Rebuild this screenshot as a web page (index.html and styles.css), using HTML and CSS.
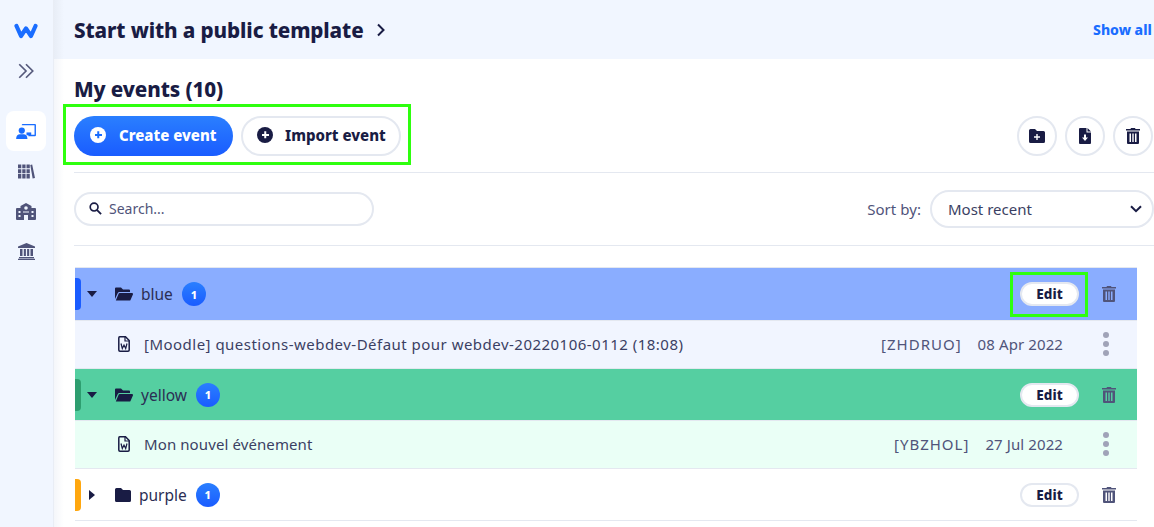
FILE: index.html
```html
<!DOCTYPE html>
<html lang="en">
<head>
<meta charset="utf-8">
<title>My events</title>
<link rel="stylesheet" href="styles.css">
</head>
<body>
<div class="app">
  <nav class="side">
    <svg class="logo" viewBox="0 0 24 16" width="24" height="16"><path d="M2.500 3 L7 13 L12 5.500 L17 13 L21.500 3" fill="none" stroke="#1a6dff" stroke-width="4.200" stroke-linecap="round" stroke-linejoin="round"/></svg>
    <svg class="chev" viewBox="0 0 16 16" width="18" height="18"><path d="M2 2 L8 8 L2 14 M8 2 L14 8 L8 14" fill="none" stroke="#565a7c" stroke-width="1.500"/></svg>
    <a class="nav-btn active"><svg viewBox="0 0 22 18" width="21" height="17"><path d="M6 2.500V1.800A1 1 0 0 1 7 1H20a1 1 0 0 1 1 1V13a1 1 0 0 1-1 1H13V12.500H19.500V2.500Z" fill="#1a6dff"/><rect x="11" y="10" width="5" height="3" fill="#1a6dff"/><circle cx="6" cy="8" r="3.300" fill="#1a6dff"/><path d="M0 17c0-3.500 2-5 4-5h4c2 0 4 1.500 4 5z" fill="#1a6dff"/></svg></a>
    <a class="nav-btn"><svg viewBox="0 0 18 17" width="17" height="17"><path d="M0 1h3.500v4H0zM4.500 1H8v4H4.500zM9 1h3.500v4H9zM0 6h3.500v4H0zM4.500 6H8v4H4.500zM9 6h3.500v4H9zM0 11h3.500v5H0zM4.500 11H8v5H4.500zM9 11h3.500v5H9zM13 1.500l2-.5 3 14.500-2.500.5z" fill="#50547a"/></svg></a>
    <a class="nav-btn"><svg viewBox="0 0 20 17" width="20" height="17"><path d="M0 6a1 1 0 0 1 1-1h3.500V3L10 0l5.500 3V5H19a1 1 0 0 1 1 1V16a1 1 0 0 1-1 1H12V12H8v5H1a1 1 0 0 1-1-1Z" fill="#50547a"/><circle cx="10" cy="5" r="1.800" fill="#f1f6ff"/><path d="M2.500 8h2v2h-2zM2.500 12h2v2h-2zM15.500 8h2v2h-2zM15.500 12h2v2h-2zM7 8.500h6v1H7z" fill="#f1f6ff"/></svg></a>
    <a class="nav-btn"><svg viewBox="0 0 17 17" width="17" height="17"><path d="M8.500 0 17 3.500V5H0V3.500ZM2 6h2.500v7H2zM5.800 6h2.100v7H5.800zM9.100 6h2.100v7H9.100zM12.500 6H15v7h-2.500zM1 14h15v1.200H1zM0 15.700h17V17H0z" fill="#50547a"/></svg></a>
  </nav>
  <div class="content">
    <header class="top">
      <h2 class="top-title">Start with a public template</h2>
      <svg class="top-chev" viewBox="0 0 10 14" width="10" height="14"><path d="M2 1.500 L7.500 7 L2 12.500" fill="none" stroke="#191c44" stroke-width="2"/></svg>
      <a class="show-all">Show all</a>
    </header>
    <main class="main">
      <h1 class="title">My events (10)</h1>
      <div class="actions">
        <div class="btn-group">
          <button class="btn btn-primary"><span class="plus plus-white"></span>Create event</button>
          <button class="btn btn-ghost"><span class="plus plus-dark"></span>Import event</button>
          <span class="highlight hl-actions"></span>
        </div>
        <div class="tools">
          <button class="round"><svg viewBox="0 0 16 14" width="16" height="14"><path d="M0 1.500A1.500 1.500 0 0 1 1.500 0H6l2 2h6.500A1.500 1.500 0 0 1 16 3.500v9a1.500 1.500 0 0 1-1.500 1.500h-13A1.500 1.500 0 0 1 0 12.500Z" fill="#191c44"/><path d="M7.300 5h1.400v2.300H11v1.400H8.700V11H7.300V8.700H5V7.300H7.300Z" fill="#fff"/></svg></button>
          <button class="round"><svg viewBox="0 0 12 16" width="12" height="16"><path d="M1 0H7.500V4.500H12V15a1 1 0 0 1-1 1H1a1 1 0 0 1-1-1V1a1 1 0 0 1 1-1ZM8.500 0 12 3.500H8.500Z" fill="#191c44"/><path d="M5 6.500H7V9.500H9L6 13 3 9.500H5Z" fill="#fff"/></svg></button>
          <button class="round"><svg class="trash" viewBox="0 0 14 16" width="14" height="16"><path d="M5 0H9L9.500 1H14V2.500H0V1H4.500ZM1 3.500H13V15A1 1 0 0 1 12 16H2A1 1 0 0 1 1 15ZM3.500 5.500V14H5V5.500ZM6.300 5.500V14H7.700V5.500ZM9 5.500V14H10.500V5.500Z" fill="#191c44" fill-rule="evenodd"/></svg></button>
        </div>
      </div>
      <div class="filters">
        <label class="search">
          <svg viewBox="0 0 14 14" width="13" height="13"><circle cx="5.500" cy="5.500" r="4.200" fill="none" stroke="#191c44" stroke-width="1.800"/><path d="M8.700 8.700 13 13" stroke="#191c44" stroke-width="2"/></svg>
          <span class="search-text">Search...</span>
        </label>
        <div class="sort">
          <span class="sort-label">Sort by:</span>
          <div class="select">Most recent
            <svg viewBox="0 0 12 8" width="12" height="8"><path d="M1 1.200 6 6.200 11 1.200" fill="none" stroke="#191c44" stroke-width="2"/></svg>
          </div>
        </div>
      </div>
      <div class="list">
        <div class="folder folder-blue">
          <span class="tab tab-blue"></span>
          <span class="caret-down"></span>
          <svg class="folder-ic" viewBox="0 0 18 14" width="18" height="14"><path d="M0 1.500A1 1 0 0 1 1 .5H6l2 2h6a1 1 0 0 1 1 1V5H4.500A2 2 0 0 0 2.700 6.200L0 12ZM3.700 6.500A1 1 0 0 1 4.600 6H17a1 1 0 0 1 .9 1.400L15.500 13a1 1 0 0 1-.9.6H.8Z" fill="#191c44"/></svg>
          <span class="name">blue</span>
          <span class="badge">1</span>
          <span class="edit">Edit</span>
          <span class="highlight hl-edit"></span>
          <svg class="bin" viewBox="0 0 14 16" width="14" height="16"><path d="M5 0H9L9.500 1H14V2.500H0V1H4.500ZM1 3.500H13V15A1 1 0 0 1 12 16H2A1 1 0 0 1 1 15ZM3.500 5.500V14H5V5.500ZM6.300 5.500V14H7.700V5.500ZM9 5.500V14H10.500V5.500Z" fill="#50547a" fill-rule="evenodd"/></svg>
        </div>
        <div class="item item-blue">
          <svg class="doc" viewBox="0 0 12 16" width="12" height="16"><path d="M1.800.8H7.500L11.200 4.500V14A1.200 1.200 0 0 1 10 15.200H2A1.200 1.200 0 0 1 .8 14V2A1.200 1.200 0 0 1 1.800.8Z" fill="none" stroke="#191c44" stroke-width="1.500"/><path d="M7 1V5H11" fill="none" stroke="#191c44" stroke-width="1.200"/><path d="M3 7.500 4.300 12.500 6 9 7.700 12.500 9 7.500" fill="none" stroke="#191c44" stroke-width="1.200"/></svg>
          <span class="item-name item-name-long">[Moodle] questions-webdev-Défaut pour webdev-20220106-0112 (18:08)</span>
          <span class="code">[ZHDRUO]</span>
          <span class="date">08 Apr 2022</span>
          <span class="dots"><i></i><i></i><i></i></span>
        </div>
        <div class="folder folder-green">
          <span class="tab tab-green"></span>
          <span class="caret-down"></span>
          <svg class="folder-ic" viewBox="0 0 18 14" width="18" height="14"><path d="M0 1.500A1 1 0 0 1 1 .5H6l2 2h6a1 1 0 0 1 1 1V5H4.500A2 2 0 0 0 2.700 6.200L0 12ZM3.700 6.500A1 1 0 0 1 4.600 6H17a1 1 0 0 1 .9 1.400L15.500 13a1 1 0 0 1-.9.6H.8Z" fill="#191c44"/></svg>
          <span class="name">yellow</span>
          <span class="badge">1</span>
          <span class="edit">Edit</span>
          <svg class="bin" viewBox="0 0 14 16" width="14" height="16"><path d="M5 0H9L9.500 1H14V2.500H0V1H4.500ZM1 3.500H13V15A1 1 0 0 1 12 16H2A1 1 0 0 1 1 15ZM3.500 5.500V14H5V5.500ZM6.300 5.500V14H7.700V5.500ZM9 5.500V14H10.500V5.500Z" fill="#50547a" fill-rule="evenodd"/></svg>
        </div>
        <div class="item item-green">
          <svg class="doc" viewBox="0 0 12 16" width="12" height="16"><path d="M1.800.8H7.500L11.200 4.500V14A1.200 1.200 0 0 1 10 15.200H2A1.200 1.200 0 0 1 .8 14V2A1.200 1.200 0 0 1 1.800.8Z" fill="none" stroke="#191c44" stroke-width="1.500"/><path d="M7 1V5H11" fill="none" stroke="#191c44" stroke-width="1.200"/><path d="M3 7.500 4.300 12.500 6 9 7.700 12.500 9 7.500" fill="none" stroke="#191c44" stroke-width="1.200"/></svg>
          <span class="item-name">Mon nouvel événement</span>
          <span class="code">[YBZHOL]</span>
          <span class="date">27 Jul 2022</span>
          <span class="dots"><i></i><i></i><i></i></span>
        </div>
        <div class="folder folder-plain">
          <span class="tab tab-orange"></span>
          <span class="caret-right"></span>
          <svg class="folder-ic" viewBox="0 0 16 14" width="16" height="14"><path d="M0 1.500A1.500 1.500 0 0 1 1.500 0H6l2 2h6.500A1.500 1.500 0 0 1 16 3.500v9a1.500 1.500 0 0 1-1.500 1.500h-13A1.500 1.500 0 0 1 0 12.500Z" fill="#191c44"/></svg>
          <span class="name">purple</span>
          <span class="badge">1</span>
          <span class="edit edit-outline">Edit</span>
          <svg class="bin" viewBox="0 0 14 16" width="14" height="16"><path d="M5 0H9L9.500 1H14V2.500H0V1H4.500ZM1 3.500H13V15A1 1 0 0 1 12 16H2A1 1 0 0 1 1 15ZM3.500 5.500V14H5V5.500ZM6.300 5.500V14H7.700V5.500ZM9 5.500V14H10.500V5.500Z" fill="#50547a" fill-rule="evenodd"/></svg>
        </div>
      </div>
    </main>
  </div>
</div>
</body>
</html>
```

FILE: styles.css
```css
* { box-sizing: border-box; }
html, body { margin: 0; height: 100%; overflow: hidden; background: #fff; }
body { font-family: "Noto Sans", "Open Sans", sans-serif; color: #191c44; }
.app { display: flex; width: 1154px; height: 527px; overflow: hidden; }

.side { width: 54px; flex: none; background: #f1f6ff; display: flex; flex-direction: column; align-items: center; padding: 23px 1px 0 0; border-right: 1px solid #e9edf5; }
.logo { display: block; }
.chev { display: block; margin-top: 23px; margin-bottom: 31px; }
.nav-btn { width: 40px; height: 40px; border-radius: 8px; display: flex; align-items: center; justify-content: center; }
.nav-btn.active { background: #fff; }

.content { flex: 1; min-width: 0; display: flex; flex-direction: column; background: linear-gradient(90deg, #f4f6fa 0, #fff 10px); }
.top { height: 59px; flex: none; background: linear-gradient(90deg, #e8edf6 0, #f1f6ff 10px); display: flex; align-items: center; padding-left: 20px; }
.top-title { margin: 0; font-size: 20.600px; font-weight: 800; line-height: 26px; color: #191c44; letter-spacing: -.1px; }
.top-chev { margin-left: 12px; }
.show-all { margin-left: auto; font-size: 14px; font-weight: 800; color: #1a6dff; white-space: nowrap; width: 61px; overflow: hidden; }

.main { flex: 1; padding: 17px 0 0 20px; min-width: 0; }
.title { margin: 0; font-size: 20.600px; font-weight: 800; line-height: 26px; letter-spacing: -.1px; }
.actions { display: flex; align-items: center; justify-content: space-between; margin-top: 14px; height: 57px; padding: 0 0 17px; border-bottom: 1px solid #e4e8f0; }
.btn-group { display: flex; gap: 8px; position: relative; }
.btn { height: 40px; border-radius: 20px; display: flex; align-items: center; font: 800 15px "Noto Sans", sans-serif; padding: 0 16px 1px; white-space: nowrap; }
.btn-primary { width: 159px; border: 0; color: #fff; background: linear-gradient(180deg, #2a7fff 0, #1a5cff 100%); }
.btn-ghost { width: 160px; color: #191c44; background: #fff; border: 2px solid #e4e8f0; padding: 0 14px 1px; }
.plus { width: 16px; height: 16px; border-radius: 50%; margin-right: 13px; position: relative; flex: none; }
.plus-dark { margin-right: 12px; }
.plus::before, .plus::after { content: ""; position: absolute; left: 4.500px; top: 7.250px; width: 7px; height: 1.500px; background: currentColor; }
.plus::after { transform: rotate(90deg); }
.plus-white { background: #fff; color: #1a6dff; }
.plus-dark { background: #191c44; color: #fff; }
.tools { display: flex; gap: 8px; padding-right: 1px; }
.round { width: 40px; height: 40px; border-radius: 50%; border: 2px solid #e4e8f0; background: #fff; padding: 0; display: flex; align-items: center; justify-content: center; }

.highlight { position: absolute; border: 3px solid #2eff0e; pointer-events: none; }
.hl-actions { left: -11px; top: -12px; width: 348px; height: 61px; }
.hl-edit { left: 935px; top: 4px; width: 78px; height: 45px; }

.filters { display: flex; justify-content: space-between; align-items: center; height: 73px; padding-bottom: 1px; border-bottom: 1px solid #e4e8f0; }
.search { width: 300px; height: 34px; border: 2px solid #e4e8f0; border-radius: 17px; display: flex; align-items: center; padding-left: 13px; gap: 7px; background: #fff; }
.search-text { font-size: 14px; color: #50547a; }
.sort { display: flex; align-items: center; gap: 9px; }
.sort-label { font-size: 15px; color: #50547a; margin-left: -1px; letter-spacing: .05px; }
.select { width: 224px; height: 38px; border: 2px solid #e4e8f0; border-radius: 19px; display: flex; align-items: center; justify-content: space-between; padding: 0 10px 0 16px; font-size: 15px; color: #3b3f63; background: #fff; }

.list { margin: 21px 0 0 1px; width: 1062px; }
.folder, .item { position: relative; display: flex; align-items: center; }
.folder { height: 53px; padding-left: 12px; border-top: 1px solid #e4e8f0; }
.folder-blue { background: #8aadff; }
.folder-green { background: #55cfa1; height: 52px; }
.folder-plain { background: #fff; height: 53px; border-bottom: 1px solid #e4e8f0; }
.item { height: 48px; padding-left: 43px; padding-bottom: 2px; border-top: 1px solid #e4e8f0; }
.item-blue { background: #f1f5ff; }
.item-green { background: #eafff6; }

.tab { position: absolute; left: 0; top: 10px; width: 6px; height: 32px; border-radius: 0 4px 4px 0; }
.tab-blue { background: #1a5cff; }
.tab-green { background: #2e9e70; }
.tab-orange { background: #ffa70f; }
.caret-down { width: 0; height: 0; border: 5px solid transparent; border-top: 6px solid #191c44; border-bottom: 0; }
.caret-right { width: 0; height: 0; border: 5px solid transparent; border-left: 6px solid #191c44; border-right: 0; margin-left: 2px; }
.folder-ic { margin-left: 18px; flex: none; }
.folder-plain .folder-ic { margin-left: 20px; }
.name { font-size: 15.500px; margin-left: 8px; color: #2b2e54; }
.badge { width: 24px; height: 24px; border-radius: 50%; background: linear-gradient(180deg, #2a7fff, #1a5cff); color: #fff; font-size: 11px; font-weight: 800; display: flex; align-items: center; justify-content: center; margin-left: 9px; }
.edit { margin-left: auto; width: 59px; height: 24px; border-radius: 12px; background: #fff; border: 2px solid #e4e8f0; font-size: 13.500px; font-weight: 800; display: flex; align-items: center; justify-content: center; margin-right: 23px; }
.bin { margin-right: 21px; flex: none; }
.doc { flex: none; }
.item-name { font-size: 15px; color: #3b3f63; margin-left: 14px; flex: 1; }
.item-name-long { letter-spacing: .48px; }
.item-green .item-name { letter-spacing: .1px; }
.code { font-size: 15px; color: #50547a; letter-spacing: 1px; }
.date { font-size: 15px; color: #50547a; margin-left: 16px; letter-spacing: .1px; }
.dots { display: flex; flex-direction: column; gap: 3px; margin-left: 40px; margin-right: 28px; }
.dots i { width: 6px; height: 6px; border-radius: 50%; background: #a0a3b8; display: block; }
```
